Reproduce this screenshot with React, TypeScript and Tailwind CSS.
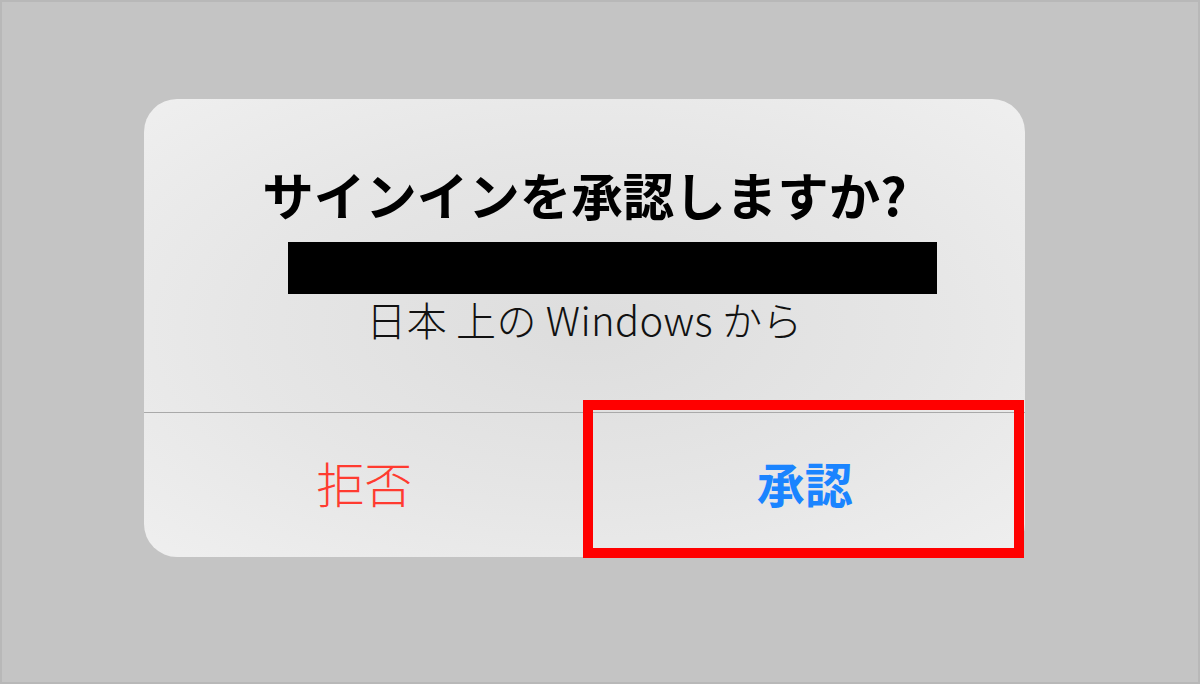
import React from 'react';

const font = { fontFamily: '"Noto Sans CJK JP", "Noto Sans", sans-serif' };

const ApproveDialog: React.FC = () => {
    return (
        <div className="relative w-[881px] h-[458px] rounded-[33px] bg-[radial-gradient(ellipse_at_center,#dddddd_0%,#e6e6e6_55%,#efefef_100%)] flex flex-col">
            <div className="h-[313px] flex flex-col">
                <h1 className="mt-[65px] text-center text-[51.5px] leading-[60px] font-bold text-black">
                    サインインを承認しますか?
                </h1>
                <div className="mt-[18px] ml-[144px] w-[649px] h-[52px] bg-black" />
                <p className="mt-[1px] text-center text-[40px] leading-[48px] font-light text-[#111111] tracking-[0.3px]">
                    日本 上の Windows から
                </p>
            </div>
            <div className="h-px bg-[#a9a9a9]" />
            <div className="flex-1 grid grid-cols-2 pb-[6px]">
                <button className="flex items-center justify-center text-[48px] font-light text-[#ff3b30]">
                    拒否
                </button>
                <button className="flex items-center justify-center text-[48px] font-bold text-[#1a84ff]">
                    承認
                </button>
            </div>
            {/* highlight marker */}
            <div className="absolute left-[439px] top-[301px] w-[441px] h-[158px] border-[10px] border-[#ff0000]" />
        </div>
    );
};

export default function App() {
    return (
        <div className="w-[1200px] h-[684px] bg-[#c4c4c4] border-2 border-[#b8b8b8] pl-[142px] pt-[97px]" style={font}>
            <ApproveDialog />
        </div>
    );
}
